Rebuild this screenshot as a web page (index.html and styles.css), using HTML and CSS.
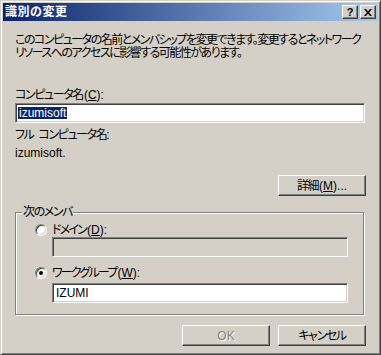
FILE: index.html
```html
<!DOCTYPE html>
<html lang="ja">
<head>
<meta charset="utf-8">
<link rel="stylesheet" href="styles.css">
</head>
<body>
<div class="window">
  <div class="titlebar">
    <span class="title">識別の変更</span>
    <div class="tbtns">
      <span class="tbtn q">?</span>
      <span class="tbtn x"><svg width="8" height="7" viewBox="0 0 8 7"><path d="M0 0h2l2 2.5 2-2.5h2l-3 3.5 3 3.5h-2l-2-2.5-2 2.5h-2l3-3.5z" fill="#000"/></svg></span>
    </div>
  </div>
  <div class="content">
    <p class="desc">このコンピュータの名前とメンバシップを変更できます。変更するとネットワーク<br>リソースへのアクセスに影響する可能性があります。</p>
    <div class="label l-name">コンピュータ名<span class="mn">(<u>C</u>):</span></div>
    <div class="field f-name"><span class="sel latin">izumisoft</span></div>
    <div class="label l-full">フル コンピュータ名:</div>
    <div class="label l-fullval latin">izumisoft.</div>
    <div class="row-right r-detail"><span class="btn">詳細<span class="mn">(<u>M</u>)...</span></span></div>
    <div class="group">
      <span class="legend">次のメンバ</span>
      <div class="radio-row rr1"><span class="radio"></span><span class="rlabel">ドメイン<span class="mn">(<u>D</u>):</span></span></div>
      <div class="field f-sub disabled"></div>
      <div class="radio-row rr2"><span class="radio checked"></span><span class="rlabel">ワークグループ<span class="mn">(<u>W</u>):</span></span></div>
      <div class="field f-sub"><span class="val latin">IZUMI</span></div>
    </div>
    <div class="row-right r-bottom">
      <span class="btn disabled-btn latin">OK</span>
      <span class="btn">キャンセル</span>
    </div>
  </div>
</div>
</body>
</html>
```
FILE: styles.css
```css
html, body {
  margin: 0;
  padding: 0;
  background: #d4d0c8;
}
body {
  width: 381px;
  height: 355px;
  overflow: hidden;
  font-family: "Liberation Sans", "Noto Sans CJK JP", sans-serif;
  font-size: 12px;
  line-height: 12px;
  color: #000;
  font-feature-settings: "palt";
  letter-spacing: -1.4px;
}
.latin { letter-spacing: 0; }
.mn { letter-spacing: 0; margin-left: 1px; }
u { text-decoration: underline; text-underline-offset: 1px; }
.window {
  box-sizing: border-box;
  width: 381px;
  height: 355px;
  border-top: 1px solid #d4d0c8;
  border-left: 1px solid #d4d0c8;
  border-right: 1px solid #404040;
  border-bottom: 1px solid #404040;
  box-shadow: inset 1px 1px #fff, inset -1px -1px #808080;
  padding: 2px;
  display: flex;
  flex-direction: column;
}
.titlebar {
  height: 18px;
  flex: none;
  background: linear-gradient(to right, #0a246a, #a6caf0);
  display: flex;
  align-items: center;
  justify-content: space-between;
  padding: 0 2px 0 2px;
}
.title {
  color: #fff;
  font-weight: bold;
  font-size: 12px;
  letter-spacing: 0.5px;
  font-feature-settings: normal;
  line-height: 14px;
}
.tbtns { display: flex; gap: 2px; }
.tbtn {
  box-sizing: border-box;
  width: 16px;
  height: 14px;
  background: #d4d0c8;
  border-top: 1px solid #fff;
  border-left: 1px solid #fff;
  border-right: 1px solid #404040;
  border-bottom: 1px solid #404040;
  box-shadow: inset -1px -1px #808080;
  display: flex;
  align-items: center;
  justify-content: center;
  letter-spacing: 0;
}
.tbtn.q {
  font-family: "Liberation Sans", sans-serif;
  font-weight: bold;
  font-size: 11px;
  line-height: 11px;
}
.content {
  padding: 13px 0 0 12px;
  display: flex;
  flex-direction: column;
}
.desc {
  margin: 0;
  white-space: nowrap;
  letter-spacing: -1.5px;
  line-height: 13px;
}
.label { white-space: nowrap; word-spacing: 3px; }
.l-name { margin-top: 29px; }
.field {
  box-sizing: border-box;
  height: 20px;
  background: #fff;
  border-top: 1px solid #808080;
  border-left: 1px solid #808080;
  border-right: 1px solid #fff;
  border-bottom: 1px solid #fff;
  box-shadow: inset 1px 1px #404040, inset -1px -1px #d4d0c8;
  display: flex;
  align-items: center;
  padding-left: 2px;
}
.f-name { width: 350px; margin-top: 2px; }
.sel {
  background: #0a246a;
  color: #fff;
  padding: 0 1px;
  line-height: 12px;
}
.l-full { margin-top: 6px; }
.l-fullval { margin-top: 6px; word-spacing: 0; }
.row-right {
  display: flex;
  justify-content: flex-end;
  gap: 8px;
  width: 351px;
}
.r-detail { margin-top: 16px; }
.btn {
  box-sizing: border-box;
  width: 88px;
  height: 21px;
  background: #d4d0c8;
  border-top: 1px solid #fff;
  border-left: 1px solid #fff;
  border-right: 1px solid #404040;
  border-bottom: 1px solid #404040;
  box-shadow: inset -1px -1px #808080;
  display: flex;
  align-items: center;
  justify-content: center;
  white-space: nowrap;
}
.disabled-btn {
  color: #808080;
  text-shadow: 1px 1px #fff;
}
.group {
  position: relative;
  box-sizing: border-box;
  width: 349px;
  margin-top: 16px;
  margin-left: 0;
  border: 1px solid #808080;
  box-shadow: inset 1px 1px #fff, 1px 1px #fff;
  padding: 11px 0 11px 36px;
  display: flex;
  flex-direction: column;
}
.legend {
  position: absolute;
  top: -7px;
  left: 6px;
  background: #d4d0c8;
  padding: 0 1px;
  line-height: 12px;
}
.radio-row {
  display: flex;
  align-items: center;
  height: 12px;
  margin-left: -17px;
}
.rr2 { margin-top: 10px; }
.rlabel { letter-spacing: -1.8px; }
.radio {
  box-sizing: border-box;
  width: 12px;
  height: 12px;
  border-radius: 50%;
  background: #fff;
  border: 1px solid;
  border-color: #808080 #fff #fff #808080;
  box-shadow: inset 1px 1px #404040, inset -1px -1px #d4d0c8;
  margin-right: 5px;
  position: relative;
}
.radio.checked::after {
  content: "";
  position: absolute;
  left: 3px;
  top: 3px;
  width: 4px;
  height: 4px;
  border-radius: 50%;
  background: #000;
}
.f-sub { width: 296px; margin-top: 1px; }
.rr2 + .f-sub { margin-top: 4px; }
.disabled { background: #d4d0c8; }
.val { padding-left: 1px; }
.r-bottom { margin-top: 10px; width: 351px; }
```
